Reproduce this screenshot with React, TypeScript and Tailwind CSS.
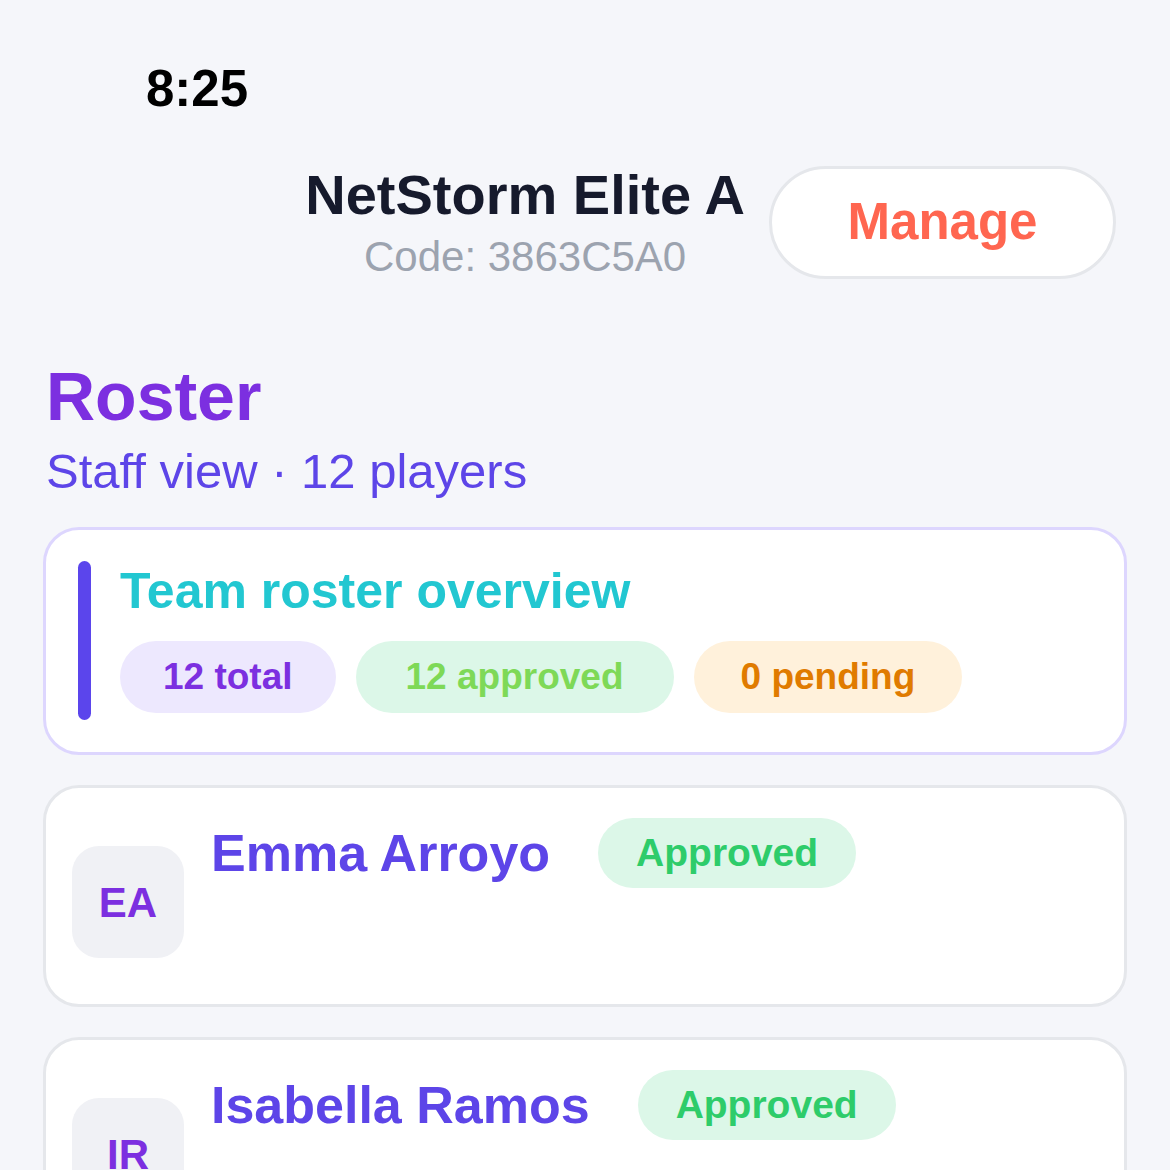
import React from 'react';

const players = [
  { initials: 'EA', name: 'Emma Arroyo', status: 'Approved' },
  { initials: 'IR', name: 'Isabella Ramos', status: 'Approved' },
  { initials: 'SK', name: 'Sofia Kim', status: 'Approved' },
];

function PlayerCard({ player }) {
  return (
    <div className="flex items-start gap-[27px] rounded-[36px] border-[3px] border-[#e5e7eb] bg-white px-[26px] py-[30px]">
      <div className="mt-[28px] flex h-[112px] w-[112px] shrink-0 items-center justify-center rounded-[27px] bg-[#f0f1f5]">
        <span className="text-[42px] font-bold text-[#7c2fe0]">{player.initials}</span>
      </div>
      <div className="flex min-h-[156px] flex-col">
        <div className="flex items-center gap-[48px]">
          <span className="text-[52px] font-bold leading-[60px] text-[#5d45e8]">{player.name}</span>
          <span className="flex h-[70px] items-center rounded-full bg-[#dcf7e8] px-[38px] text-[39px] font-bold text-[#2ecc6a]">
            {player.status}
          </span>
        </div>
      </div>
    </div>
  );
}

export default function App() {
  return (
    <div
      className="min-h-[1170px] bg-[#f5f6fa] text-black"
      style={{ fontFamily: '"Liberation Sans", Arial, sans-serif' }}
    >
      <div className="h-[163px] pl-[146px] pt-[59px]">
        <span className="text-[51px] font-bold leading-[60px]">8:25</span>
      </div>

      <div className="flex items-center justify-end gap-[24px] pr-[54px]">
        <div className="flex flex-col items-center">
          <div className="text-[56px] font-bold leading-[64px] text-[#161a2c]">NetStorm Elite A</div>
          <div className="mt-[6px] text-[42px] leading-[48px] text-[#9ca3af]">Code: 3863C5A0</div>
        </div>
        <button className="flex h-[113px] w-[347px] items-center justify-center rounded-full border-[3px] border-[#e5e7eb] bg-white text-[51px] font-bold text-[#ff6650]">
          Manage
        </button>
      </div>

      <div className="px-[43px] pt-[77px]">
        <h1 className="pl-[3px] text-[68px] font-bold leading-[76px] text-[#7c2fe0]">Roster</h1>
        <p className="mt-[9px] pl-[3px] text-[49px] leading-[56px] text-[#5d45e8]">Staff view · 12 players</p>

        <div className="mt-[28px] flex flex-col gap-[30px]">
          <div className="flex gap-[29px] rounded-[36px] border-[3px] border-[#ddd6fe] bg-white p-[31px] pb-[32px] pl-[32px]">
            <div className="w-[13px] shrink-0 rounded-full bg-[#5b45ec]" />
            <div className="flex flex-col pb-[7px]">
              <div className="text-[50px] font-bold leading-[60px] text-[#22c7d1]">Team roster overview</div>
              <div className="mt-[20px] flex gap-[20px]">
                <span className="flex h-[72px] items-center rounded-full bg-[#ede8fe] px-[43px] text-[37px] font-bold text-[#7c2fe0]">
                  12 total
                </span>
                <span className="flex h-[72px] items-center rounded-full bg-[#dcf7e8] px-[50px] text-[37px] font-bold text-[#7ed957]">
                  12 approved
                </span>
                <span className="flex h-[72px] items-center rounded-full bg-[#fff1db] px-[47px] text-[37px] font-bold text-[#e07b00]">
                  0 pending
                </span>
              </div>
            </div>
          </div>

          {players.map(p => (
            <PlayerCard key={p.name} player={p} />
          ))}
        </div>
      </div>
    </div>
  );
}
